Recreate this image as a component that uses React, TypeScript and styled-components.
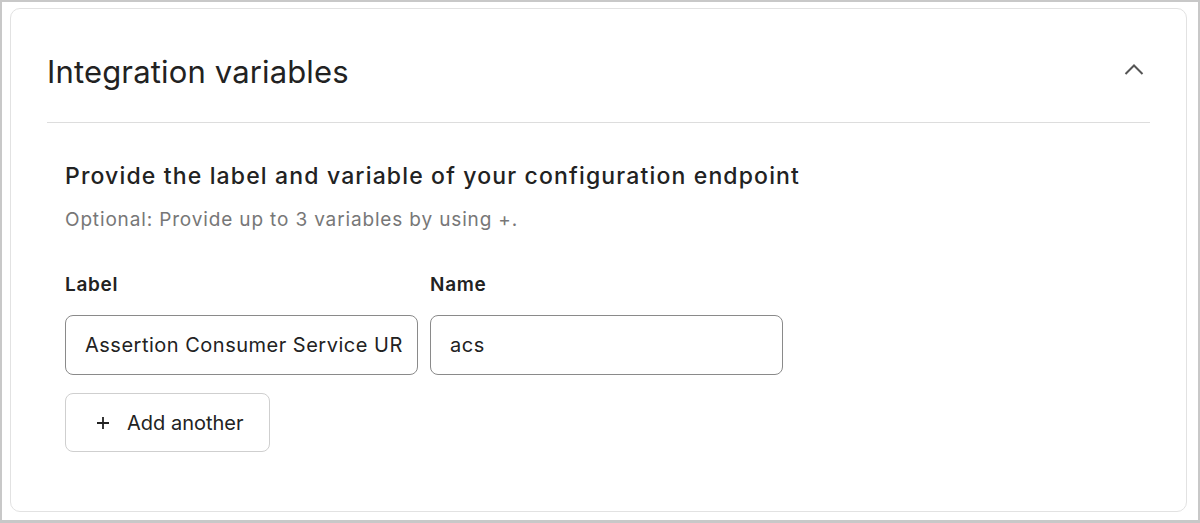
import styled, { createGlobalStyle } from "styled-components";

const GlobalStyle = createGlobalStyle`
  body {
    margin: 0;
    background: #ffffff;
    font-family: Inter, "Noto Sans", Arial, sans-serif;
    color: #222222;
  }
`;

const Frame = styled.div`
  width: 1200px;
  height: 523px;
  box-sizing: border-box;
  border: 2px solid #c8c8c8;
  border-bottom-width: 3px;
  padding: 6px 11px 8px 8px;
  background: #ffffff;
`;

const Card = styled.section`
  height: 100%;
  box-sizing: border-box;
  border: 1px solid #e2e2e2;
  border-radius: 10px;
  padding: 0 36px;
`;

const Header = styled.div`
  display: flex;
  align-items: center;
  justify-content: space-between;
  height: 114px;
  padding-top: 11px;
  border-bottom: 1px solid #dddddd;
  box-sizing: border-box;
`;

const Title = styled.h2`
  margin: 0;
  font-size: 31px;
  font-weight: 430;
  letter-spacing: 0.15px;
  color: #222222;
`;

const Toggle = styled.button`
  border: none;
  background: none;
  padding: 0;
  margin: 0 6px 4px 0;
  display: flex;
  color: #555555;
  cursor: pointer;
`;

const Body = styled.div`
  padding: 39px 18px 0;
`;

const Subheading = styled.h3`
  margin: 0;
  font-size: 23px;
  line-height: 28px;
  font-weight: 500;
  letter-spacing: 1.15px;
  color: #222222;
`;

const Hint = styled.p`
  margin: 18px 0 0;
  font-size: 19px;
  line-height: 24px;
  letter-spacing: 0.85px;
  color: #777777;
`;

const Fields = styled.div`
  display: flex;
  gap: 12px;
  margin-top: 41px;
`;

const Field = styled.label`
  display: flex;
  flex-direction: column;
  gap: 18px;
  width: 353px;
`;

const FieldLabel = styled.span`
  font-size: 19px;
  line-height: 24px;
  font-weight: 600;
  letter-spacing: 0.7px;
  color: #222222;
`;

const Input = styled.input`
  height: 60px;
  box-sizing: border-box;
  border: 1px solid #8a8a8a;
  border-radius: 8px;
  padding: 0 14px 0 19px;
  font-family: inherit;
  font-size: 20px;
  letter-spacing: 0.5px;
  color: #222222;
  background: #ffffff;
  outline: none;
`;

const AddButton = styled.button`
  display: flex;
  align-items: center;
  gap: 17px;
  margin-top: 18px;
  height: 59px;
  padding: 0 25px 0 30px;
  box-sizing: border-box;
  border: 1px solid #cfcfcf;
  border-radius: 8px;
  background: #ffffff;
  font-family: inherit;
  font-size: 20px;
  letter-spacing: 0;
  color: #222222;
  cursor: pointer;
`;

const ChevronUp = () => (
  <svg width="20" height="20" viewBox="0 0 20 20" fill="none">
    <path d="M1.5 15 L10 6.5 L18.5 15" stroke="currentColor" strokeWidth="2" />
  </svg>
);

const Plus = () => (
  <svg width="14" height="14" viewBox="0 0 14 14" fill="none">
    <path d="M7 1v12M1 7h12" stroke="#222" strokeWidth="1.8" />
  </svg>
);

export default function App() {
  return (
    <>
      <GlobalStyle />
      <Frame>
        <Card>
          <Header>
            <Title>Integration variables</Title>
            <Toggle aria-label="Collapse">
              <ChevronUp />
            </Toggle>
          </Header>
          <Body>
            <Subheading>Provide the label and variable of your configuration endpoint</Subheading>
            <Hint>Optional: Provide up to 3 variables by using +.</Hint>
            <Fields>
              <Field>
                <FieldLabel>Label</FieldLabel>
                <Input defaultValue="Assertion Consumer Service URL" />
              </Field>
              <Field>
                <FieldLabel>Name</FieldLabel>
                <Input defaultValue="acs" />
              </Field>
            </Fields>
            <AddButton>
              <Plus />
              Add another
            </AddButton>
          </Body>
        </Card>
      </Frame>
    </>
  );
}
